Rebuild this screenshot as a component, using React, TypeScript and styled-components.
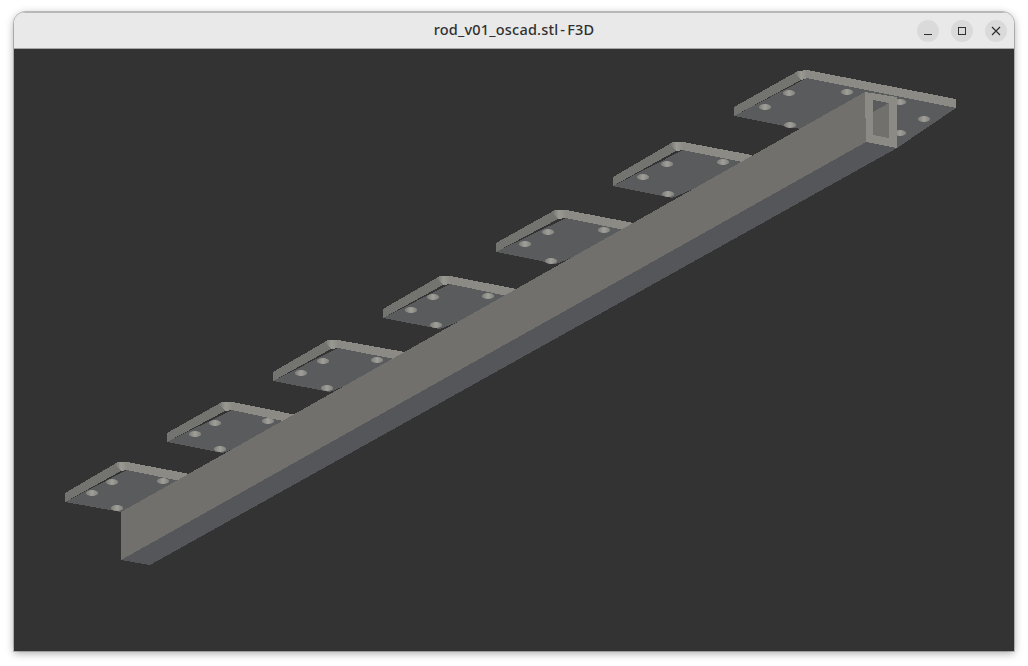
import React from "react";
import styled, { createGlobalStyle } from "styled-components";

const Global = createGlobalStyle`
  html, body { margin: 0; height: 100%; background: #ffffff; overflow: hidden; }
  #root { height: 100%; }
`;

const Page = styled.div`
  box-sizing: border-box;
  width: 1028px;
  height: 666px;
  padding: 12px 14px 15px;
  background: #ffffff;
`;

const Window = styled.main`
  display: flex;
  flex-direction: column;
  height: 100%;
  border-radius: 12px 12px 0 0;
  box-shadow: 0 0 0 1px rgba(0, 0, 0, 0.2), 0 2px 9px rgba(0, 0, 0, 0.36);
  overflow: hidden;
`;

const TitleBar = styled.header`
  position: relative;
  box-sizing: border-box;
  flex: 0 0 37px;
  display: flex;
  align-items: center;
  justify-content: flex-end;
  gap: 12px;
  padding: 0 7px;
  background: #e9e9e9;
  border-top: 1px solid #b8b8b8;
  border-bottom: 1px solid #a7a7a7;
`;

const Title = styled.h1`
  position: absolute;
  left: 0;
  right: 0;
  top: 6px;
  margin: 0;
  text-align: center;
  font: 500 14.5px/20px "Noto Sans", sans-serif;
  letter-spacing: 0.2px;
  word-spacing: -2px;
  color: #303030;
  pointer-events: none;
`;

const WindowButton = styled.button`
  display: flex;
  align-items: center;
  justify-content: center;
  width: 22px;
  height: 22px;
  padding: 0;
  border: 0;
  border-radius: 50%;
  background: #dadada;
  color: #303030;
`;

const Viewport = styled.section`
  flex: 1;
  min-height: 0;
  background: #333333;
`;

const Scene = styled.svg`
  display: block;
  width: 100%;
  height: 100%;
`;

type Pt = [number, number];
type PlateData = { l: Pt; t1: Pt; t2: Pt; end: Pt; b: Pt; holes: Pt[] };

const plates: PlateData[] = [
  { l: [65, 493], t1: [118, 462], t2: [127, 462], end: [190, 474], b: [121, 512], holes: [[112, 482], [163, 481], [92, 493], [117, 508]] },
  { l: [167, 433], t1: [222, 402], t2: [232, 402], end: [297, 415], b: [223, 453], holes: [[215, 423], [268, 421], [195, 434], [220, 449]] },
  { l: [273, 372], t1: [328, 340], t2: [338, 340], end: [405, 352], b: [330, 392], holes: [[323, 361], [377, 360], [301, 373], [327, 388]] },
  { l: [383, 309], t1: [440, 276], t2: [450, 276], end: [517, 289], b: [440, 329], holes: [[433, 297], [488, 296], [411, 310], [436, 325]] },
  { l: [496, 243], t1: [555, 210], t2: [566, 210], end: [634, 223], b: [556, 264], holes: [[548, 232], [604, 230], [525, 244], [551, 261]] },
  { l: [613, 177], t1: [673, 142], t2: [683, 142], end: [752, 155], b: [672, 198], holes: [[667, 164], [723, 162], [643, 177], [668, 194]] },
  { l: [734, 107], t1: [798, 71], t2: [807, 70], end: [956, 99], b: [897, 148], holes: [[789, 93], [847, 92], [765, 107], [790, 125], [900, 102], [924, 119], [900, 133]] },
];

const pts = (list: Pt[]) => list.map((p) => p.join(",")).join(" ");

const Plate = ({ l, t1, t2, end, b, holes }: PlateData) => {
  const floorL: Pt = [l[0], l[1] + 9];
  const inner: Pt = [t2[0], t2[1] + 8];
  const endLow: Pt = [end[0], end[1] + 9];
  return (
    <g>
      <polygon points={pts([floorL, inner, endLow, b])} fill="#5a5b5d" shapeRendering="crispEdges" />
      <polygon points={pts([l, t1, [t1[0] + 3, t1[1] + 9], floorL])} fill="#73736f" shapeRendering="crispEdges" />
      <polygon points={pts([t2, end, endLow, inner])} fill="#8b8a84" shapeRendering="crispEdges" />
      <polygon
        points={pts([[t1[0] - 3, t1[1] + 2], t1, t2, inner, [t1[0] + 3, t1[1] + 9]])}
        fill="url(#corner)"
        shapeRendering="crispEdges"
      />
      {holes.map(([cx, cy]) => (
        <ellipse key={`${cx}-${cy}`} cx={cx} cy={cy} rx={6.2} ry={3} fill="url(#hole)" />
      ))}
    </g>
  );
};

export default function App() {
  return (
    <>
      <Global />
      <Page>
        <Window>
          <TitleBar>
            <Title>rod_v01_oscad.stl - F3D</Title>
            <WindowButton aria-label="Minimize">
              <svg width="22" height="22" viewBox="0 0 22 22">
                <rect x="7" y="14" width="8" height="1" fill="currentColor" />
              </svg>
            </WindowButton>
            <WindowButton aria-label="Maximize">
              <svg width="22" height="22" viewBox="0 0 22 22">
                <rect x="7.5" y="7.5" width="7" height="7" fill="none" stroke="currentColor" />
              </svg>
            </WindowButton>
            <WindowButton aria-label="Close">
              <svg width="22" height="22" viewBox="0 0 22 22">
                <path d="M7 7l8 8M15 7l-8 8" fill="none" stroke="currentColor" strokeWidth="1.2" />
              </svg>
            </WindowButton>
          </TitleBar>
          <Viewport>
            <Scene viewBox="14 49 1000 602" preserveAspectRatio="none">
              <defs>
                <linearGradient id="hole" x1="0" x2="1" y1="0" y2="0">
                  <stop offset="0" stopColor="#7d7d79" />
                  <stop offset="0.5" stopColor="#a09f99" />
                  <stop offset="1" stopColor="#82827d" />
                </linearGradient>
                <linearGradient id="corner" x1="0" x2="1" y1="0" y2="0">
                  <stop offset="0" stopColor="#73736f" />
                  <stop offset="0.5" stopColor="#9a9992" />
                  <stop offset="1" stopColor="#8b8a84" />
                </linearGradient>
              </defs>
              {plates.map((p) => (
                <Plate key={p.l[0]} {...p} />
              ))}
              {/* bar */}
              <polygon points="121,560 150,565 897,148 866,142" fill="#55565a" shapeRendering="crispEdges" />
              <polygon points="121,512 865,92 866,142 121,560" fill="#71706c" shapeRendering="crispEdges" />
              <polygon points="865,92 897,97 897,148 866,142" fill="#8b8a84" shapeRendering="crispEdges" />
              <polygon points="873,100 889,103 889,138 873,135" fill="#71706c" shapeRendering="crispEdges" />
              <polygon points="873,100 889,103 873,112" fill="#5a5b5d" shapeRendering="crispEdges" />
            </Scene>
          </Viewport>
        </Window>
      </Page>
    </>
  );
}
